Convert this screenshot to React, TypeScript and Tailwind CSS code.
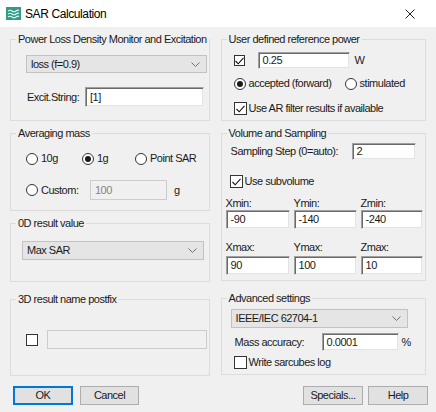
import type { ReactNode } from 'react';

type BoxProps = {
    title: string;
    className: string;
    children: ReactNode;
};

const GroupBox = ({ title, className, children }: BoxProps) => (
    <fieldset className={`min-w-0 border border-[#dcdcdc] ${className}`}>
        <legend className="ml-[5px] whitespace-nowrap px-[2px] leading-[13px]">{title}</legend>
        {children}
    </fieldset>
);

const Chevron = () => (
    <svg width="9" height="5" viewBox="0 0 9 5" fill="none">
        <polyline points="0.5,0.5 4.5,4.5 8.5,0.5" stroke="#707070" strokeWidth="1" />
    </svg>
);

const Dropdown = ({ value, className }: { value: string; className: string }) => (
    <div className={`flex items-center justify-between border border-[#c2c2c2] bg-[#e5e5e5] pl-[4px] pr-[6px] ${className}`}>
        <span>{value}</span>
        <Chevron />
    </div>
);

const Input = ({ value, className, disabled = false }: { value?: string; className: string; disabled?: boolean }) => (
    <div
        className={`flex items-center pl-[4px] ${
            disabled
                ? 'border border-[#cccccc] bg-[#f0f0f0] text-[#838383]'
                : 'border border-t-[#a0a0a0] border-l-[#a0a0a0] border-r-[#f0f0f0] border-b-[#f0f0f0] bg-white shadow-[inset_1px_1px_0_#6a6a6a,inset_-1px_-1px_0_#e3e3e3]'
        } ${className}`}
    >
        {value}
    </div>
);

const Radio = ({ checked = false }: { checked?: boolean }) => (
    <span className="flex h-[12px] w-[12px] shrink-0 items-center justify-center rounded-full border border-[#333] bg-white">
        {checked && <span className="h-[6px] w-[6px] rounded-full bg-[#1a1a1a]" />}
    </span>
);

const Check = ({ checked = false, size = 'h-[13px] w-[13px]' }: { checked?: boolean; size?: string }) => (
    <span className={`flex shrink-0 items-center justify-center border border-[#333] bg-white ${size}`}>
        {checked && (
            <svg width="9" height="8" viewBox="0 0 9 8" fill="none">
                <polyline points="0.5,4 3.2,6.8 8.5,0.8" stroke="#111" strokeWidth="1.1" />
            </svg>
        )}
    </span>
);

const Button = ({ label, primary = false, className }: { label: string; primary?: boolean; className: string }) => (
    <div
        className={`flex h-[19px] items-center justify-center bg-[#e1e1e1] ${
            primary ? 'border-2 border-[#0078d7]' : 'border border-[#adadad]'
        } ${className}`}
    >
        {label}
    </div>
);

export default function App() {
    return (
        <div className="h-[412px] w-[436px] overflow-hidden bg-[#f0f0f0] font-['Liberation_Sans',Arial,sans-serif] text-[11px] tracking-[-0.5px] text-[#1a1a1a]">
            <div className="flex h-[27px] items-center bg-white">
                <svg className="ml-[6px]" width="15" height="13" viewBox="0 0 15 13">
                    <rect width="15" height="13" fill="#2f9c88" />
                    <path d="M2 4 Q4 2.5 6 4 T10 4 T13 3.5" stroke="#e8f6f2" strokeWidth="1.1" fill="none" />
                    <path d="M2 7 Q4 5.5 6 7 T10 7 T13 6.5" stroke="#e8f6f2" strokeWidth="1.1" fill="none" />
                    <path d="M2 10 Q4 8.5 6 10 T10 10 T13 9.5" stroke="#e8f6f2" strokeWidth="1.1" fill="none" />
                </svg>
                <span className="ml-[4px] text-[12px] tracking-[-0.4px] text-black">SAR Calculation</span>
                <svg className="ml-auto mr-[21px]" width="10" height="10" viewBox="0 0 10 10">
                    <path d="M0.5 0.5 L9.5 9.5 M9.5 0.5 L0.5 9.5" stroke="#222" strokeWidth="1" />
                </svg>
            </div>

            <div className="flex gap-[11px] px-[10px] pt-[6px]">
                {/* left column */}
                <div className="flex w-[201px] flex-col">
                    <GroupBox title="Power Loss Density Monitor and Excitation" className="h-[88px]">
                        <Dropdown value="loss (f=0.9)" className="ml-[15px] mt-[9px] h-[18px] w-[181px]" />
                        <div className="mt-[14px] flex items-center">
                            <span className="ml-[16px] w-[58px]">Excit.String:</span>
                            <Input value="[1]" className="h-[20px] w-[119px]" />
                        </div>
                    </GroupBox>

                    <GroupBox title="Averaging mass" className="mt-[6px] h-[84px]">
                        <div className="ml-[15px] mt-[12px] flex h-[13px] items-center">
                            <label className="flex w-[56px] items-center gap-[3px]">
                                <Radio />
                                <span>10g</span>
                            </label>
                            <label className="flex w-[53px] items-center gap-[3px]">
                                <Radio checked />
                                <span>1g</span>
                            </label>
                            <label className="flex items-center gap-[3px]">
                                <Radio />
                                <span>Point SAR</span>
                            </label>
                        </div>
                        <div className="ml-[15px] mt-[15px] flex h-[20px] items-center">
                            <label className="flex w-[64px] items-center gap-[3px]">
                                <Radio />
                                <span>Custom:</span>
                            </label>
                            <Input value="100" disabled className="h-[20px] w-[77px]" />
                            <span className="ml-[7px]">g</span>
                        </div>
                    </GroupBox>

                    <GroupBox title="0D result value" className="mt-[6px] h-[65px]">
                        <Dropdown value="Max SAR" className="ml-[11px] mt-[11px] h-[19px] w-[182px]" />
                    </GroupBox>

                    <GroupBox title="3D result name postfix" className="mt-[11px] h-[83px]">
                        <div className="ml-[15px] mt-[24px] flex h-[19px] items-center">
                            <Check size="h-[12px] w-[12px]" />
                            <Input disabled className="ml-[9px] h-[19px] w-[160px]" />
                        </div>
                    </GroupBox>
                </div>

                {/* right column */}
                <div className="flex w-[209px] flex-col">
                    <GroupBox title="User defined reference power" className="h-[88px]">
                        <div className="ml-[12px] mt-[6px] flex h-[17px] items-center">
                            <Check checked size="h-[11px] w-[11px]" />
                            <Input value="0.25" className="ml-[13px] h-[17px] w-[92px]" />
                            <span className="ml-[5px]">W</span>
                        </div>
                        <div className="ml-[12px] mt-[8px] flex h-[13px] items-center">
                            <label className="flex w-[111px] items-center gap-[3px]">
                                <Radio checked />
                                <span>accepted (forward)</span>
                            </label>
                            <label className="flex items-center gap-[3px]">
                                <Radio />
                                <span>stimulated</span>
                            </label>
                        </div>
                        <label className="ml-[12px] mt-[12px] flex h-[13px] items-center gap-[2px]">
                            <Check checked />
                            <span>Use AR filter results if available</span>
                        </label>
                    </GroupBox>

                    <GroupBox title="Volume and Sampling" className="mt-[6px] h-[154px]">
                        <div className="ml-[9px] mt-[3px] flex h-[17px] items-center">
                            <span className="w-[121px]">Sampling Step (0=auto):</span>
                            <Input value="2" className="h-[17px] w-[64px]" />
                        </div>
                        <label className="ml-[8px] mt-[15px] flex h-[13px] items-center gap-[2px]">
                            <Check checked />
                            <span>Use subvolume</span>
                        </label>
                        <div className="ml-[4px] mt-[9px] grid grid-cols-[64px_63px_62px] gap-x-[4px]">
                            <span className="h-[13px] leading-[13px]">Xmin:</span>
                            <span className="h-[13px] leading-[13px]">Ymin:</span>
                            <span className="h-[13px] leading-[13px]">Zmin:</span>
                            <Input value="-90" className="h-[19px]" />
                            <Input value="-140" className="h-[19px]" />
                            <Input value="-240" className="h-[19px]" />
                            <span className="mt-[12px] h-[13px] leading-[13px]">Xmax:</span>
                            <span className="mt-[12px] h-[13px] leading-[13px]">Ymax:</span>
                            <span className="mt-[12px] h-[13px] leading-[13px]">Zmax:</span>
                            <Input value="90" className="mt-[2px] h-[19px]" />
                            <Input value="100" className="mt-[2px] h-[19px]" />
                            <Input value="10" className="mt-[2px] h-[19px]" />
                        </div>
                    </GroupBox>

                    <GroupBox title="Advanced settings" className="mt-[11px] h-[83px]">
                        <Dropdown value="IEEE/IEC 62704-1" className="ml-[9px] mt-[4px] h-[19px] w-[177px]" />
                        <div className="ml-[13px] mt-[5px] flex h-[18px] items-center">
                            <span className="w-[87px]">Mass accuracy:</span>
                            <Input value="0.0001" className="h-[18px] w-[77px]" />
                            <span className="ml-[3px]">%</span>
                        </div>
                        <label className="ml-[12px] mt-[5px] flex h-[13px] items-center gap-[2px]">
                            <Check />
                            <span>Write sarcubes log</span>
                        </label>
                    </GroupBox>
                </div>
            </div>

            <div className="mt-[10px] flex items-center justify-between pl-[13px] pr-[8px]">
                <div className="flex gap-[7px]">
                    <Button label="OK" primary className="w-[60px]" />
                    <Button label="Cancel" className="w-[59px]" />
                </div>
                <div className="flex gap-[5px]">
                    <Button label="Specials..." className="w-[60px]" />
                    <Button label="Help" className="w-[60px]" />
                </div>
            </div>
        </div>
    );
}
